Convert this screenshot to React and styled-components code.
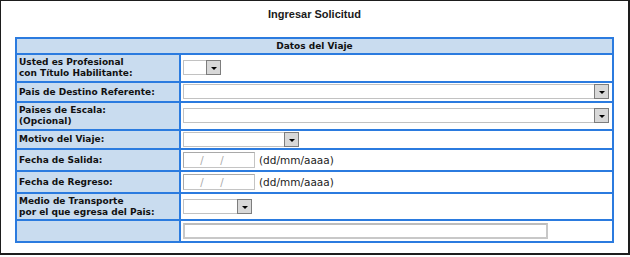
import React from "react";
import styled, { createGlobalStyle } from "styled-components";

const Global = createGlobalStyle`
  body {
    margin: 0;
    background: #fff;
  }
`;

const BLUE = "#2b7bdf";
const CELL = "#c9dcef";

const rows = [
  { label: ["Usted es Profesional", "con Título Habilitante:"], field: { kind: "select", width: 38 } },
  { label: ["Pais de Destino Referente:"], field: { kind: "select", width: 426 } },
  { label: ["Paises de Escala:", "(Opcional)"], field: { kind: "select", width: 426 } },
  { label: ["Motivo del Viaje:"], field: { kind: "select", width: 116 } },
  { label: ["Fecha de Salida:"], field: { kind: "date" } },
  { label: ["Fecha de Regreso:"], field: { kind: "date" } },
  { label: ["Medio de Transporte", "por el que egresa del Pais:"], field: { kind: "select", width: 69 } },
  { label: [], field: { kind: "text", width: 365 } },
];

export default function App() {
  return (
    <>
      <Global />
      <Frame>
        <Title>Ingresar Solicitud</Title>
        <FormTable>
          <Head>Datos del Viaje</Head>
          {rows.map((r, i) => (
            <React.Fragment key={i}>
              <Label>
                <span>
                  {r.label.map((l, j) => (
                    <span key={j}>
                      {l}
                      {j < r.label.length - 1 && <br />}
                    </span>
                  ))}
                </span>
              </Label>
              <Value>{renderField(r.field)}</Value>
            </React.Fragment>
          ))}
        </FormTable>
      </Frame>
    </>
  );
}

function renderField(f) {
  if (f.kind === "select") {
    return (
      <Select $width={f.width}>
        <ArrowBtn>
          <Tri />
        </ArrowBtn>
      </Select>
    );
  }
  if (f.kind === "date") {
    return (
      <>
        <DateBox>
          <Seg $w={16} />
          <Slash>/</Slash>
          <Seg $w={16} />
          <Slash>/</Slash>
        </DateBox>
        <Hint>(dd/mm/aaaa)</Hint>
      </>
    );
  }
  return <TextBox $width={f.width} />;
}

//styling
const Frame = styled.div`
  width: 630px;
  height: 255px;
  box-sizing: border-box;
  border: solid #1d1d1d;
  border-width: 1px 2px 2px 1px;
  background: #fff;
`;

const Title = styled.div`
  height: 36px;
  line-height: 26px;
  text-align: center;
  font-family: "Liberation Sans", Arial, sans-serif;
  font-weight: bold;
  font-size: 11px;
  color: #1a1a1a;
  padding-left: 0px;
`;

const FormTable = styled.div`
  margin-left: 14px;
  width: 599px;
  box-sizing: border-box;
  padding: 2px;
  display: grid;
  grid-template-columns: 162px 1fr;
  grid-template-rows: 14px 26px 18px 26px 17px 20px 20px 25px 20px;
  gap: 2px;
  background: ${BLUE};
  font-family: "DejaVu Sans", Verdana, sans-serif;
  font-size: 9px;
  font-weight: bold;
  color: #111;
`;

const Head = styled.div`
  grid-column: 1 / -1;
  background: ${CELL};
  display: flex;
  align-items: center;
  justify-content: center;
  line-height: 11px;
`;

const Label = styled.div`
  background: ${CELL};
  display: flex;
  align-items: center;
  padding-left: 2px;
  line-height: 11px;
`;

const Value = styled.div`
  background: #fff;
  display: flex;
  align-items: center;
  padding-left: 2px;
`;

const Select = styled.div`
  width: ${(p) => p.$width}px;
  height: 15px;
  box-sizing: border-box;
  border: 1px solid #c2c2c2;
  background: #fff;
  display: flex;
  justify-content: flex-end;
  margin-top: -1px;
`;

const ArrowBtn = styled.div`
  width: 15px;
  height: 15px;
  margin: -1px -1px -1px 0;
  box-sizing: border-box;
  border: 1px solid #7d7d7d;
  background: #d8d8d8;
  display: flex;
  align-items: center;
  justify-content: center;
  padding-top: 2px;
`;

const Tri = styled.div`
  width: 0;
  height: 0;
  border-left: 3px solid transparent;
  border-right: 3px solid transparent;
  border-top: 3px solid #000;
`;

const DateBox = styled.div`
  width: 72px;
  height: 16px;
  box-sizing: border-box;
  border: 1px solid #c4c4c4;
  border-top-color: #a9a9a9;
  border-left-color: #a9a9a9;
  background: #fff;
  display: flex;
  align-items: center;
  font-weight: normal;
  font-size: 10px;
  color: #a8a8a8;
`;

const Seg = styled.div`
  width: ${(p) => p.$w}px;
  height: 100%;
`;

const Slash = styled.span`
  width: 4px;
  text-align: center;
`;

const Hint = styled.span`
  margin-left: 4px;
  font-weight: normal;
  font-size: 10.5px;
  color: #222;
`;

const TextBox = styled.div`
  width: ${(p) => p.$width}px;
  height: 16px;
  box-sizing: border-box;
  border: 2px solid #c8c8c8;
  border-top-color: #bdbdbd;
  background: #fff;
`;
